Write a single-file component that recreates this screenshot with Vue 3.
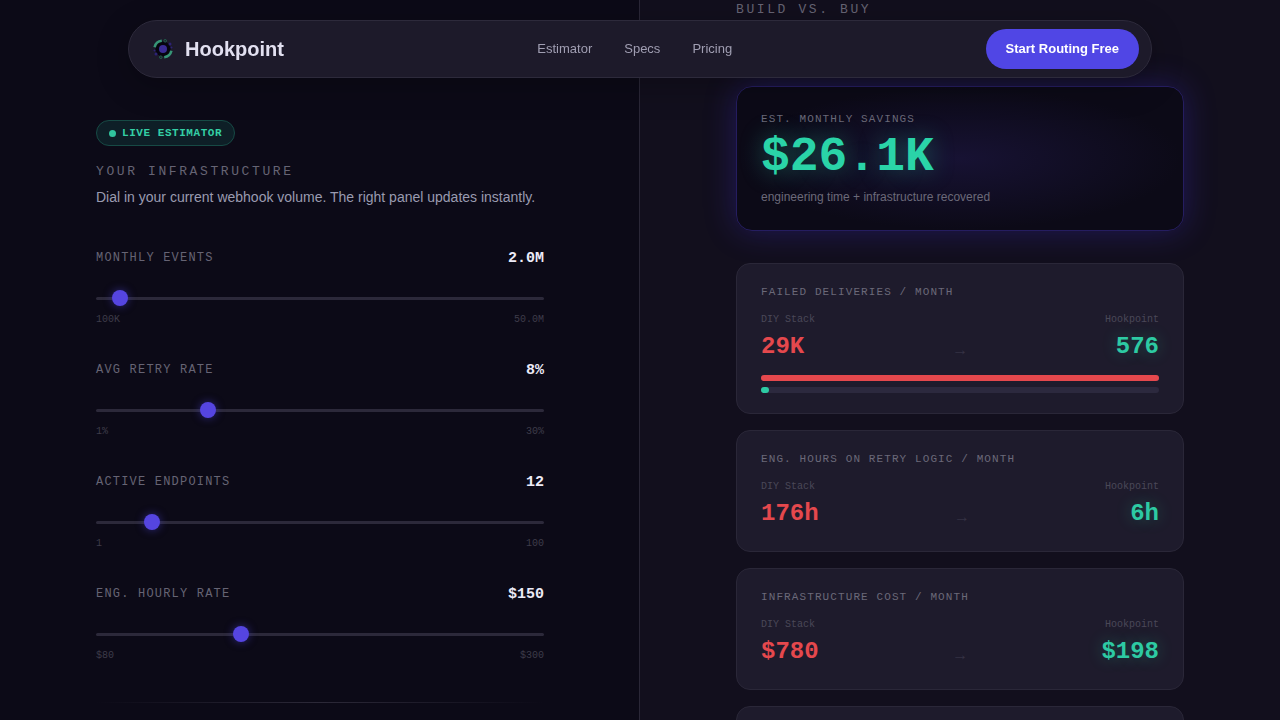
<script setup>
import { ref, computed } from 'vue'

const events = ref(2000000)
const retryRate = ref(8)
const endpoints = ref(12)
const hourlyRate = ref(150)

const sliders = [
  { id: 'events', label: 'Monthly Events', model: events, min: 100000, max: 50000000, step: 100000, format: (n) => (n >= 1e6 ? (n / 1e6).toFixed(1) + 'M' : Math.round(n / 1e3) + 'K') },
  { id: 'retry', label: 'Avg Retry Rate', model: retryRate, min: 1, max: 30, step: 1, format: (n) => n + '%' },
  { id: 'endpoints', label: 'Active Endpoints', model: endpoints, min: 1, max: 100, step: 1, format: (n) => String(n) },
  { id: 'rate', label: 'Eng. Hourly Rate', model: hourlyRate, min: 80, max: 300, step: 5, format: (n) => '$' + n }
]

const cards = [
  { title: 'Failed Deliveries / Month', diy: '29K', hook: '576', share: 2, bars: true },
  { title: 'Eng. Hours on Retry Logic / Month', diy: '176h', hook: '6h' },
  { title: 'Infrastructure Cost / Month', diy: '$780', hook: '$198' }
]

const rows = computed(() => sliders.map((s) => ({ ...s, value: s.model.value })))
function update(row, event) {
  row.model.value = Number(event.target.value)
}
</script>

<template>
  <div class="page">
    <header class="nav">
      <a class="brand" href="#">
        <svg class="logo" viewBox="0 0 20 20" fill="none" aria-hidden="true">
          <circle cx="10" cy="10" r="7.6" fill="#06050f" />
          <circle cx="10" cy="10" r="4" fill="#3a2b94" />
          <path d="M1.6 8.2C2.4 4.6 5 2.2 8.8 1.8" stroke="#379577" stroke-width="2.6" />
          <path d="M18.4 11.8C17.6 15.4 15 17.8 11.2 18.2" stroke="#379577" stroke-width="2.6" />
          <circle cx="12.2" cy="1.8" r="1.3" stroke="#24624f" />
          <circle cx="7.8" cy="18.2" r="1.3" stroke="#24624f" />
          <circle cx="17" cy="5" r="1.5" fill="#2c2275" />
          <circle cx="3" cy="15" r="1.5" fill="#2c2275" />
          <circle cx="1.5" cy="11.5" r="1" fill="#2c2275" />
          <circle cx="18.5" cy="8.5" r="1" fill="#2c2275" />
        </svg>
        <span>Hookpoint</span>
      </a>
      <nav class="links">
        <a href="#estimator">Estimator</a>
        <a href="#specs">Specs</a>
        <a href="#pricing">Pricing</a>
      </nav>
      <button class="cta" type="button">Start Routing Free</button>
    </header>

    <main class="split">
      <section id="estimator" class="panel inputs">
        <div class="badge"><span class="dot"></span>LIVE ESTIMATOR</div>
        <h2 class="eyebrow">Your Infrastructure</h2>
        <p class="intro">Dial in your current webhook volume. The right panel updates instantly.</p>
        <div class="sliders">
          <div v-for="row in rows" :key="row.id" class="field">
            <div class="field-head">
              <label :for="row.id">{{ row.label }}</label>
              <output :for="row.id">{{ row.format(row.value) }}</output>
            </div>
            <input :id="row.id" type="range" :min="row.min" :max="row.max" :step="row.step" :value="row.value" @input="update(row, $event)" />
            <div class="bounds">
              <span>{{ row.format(row.min) }}</span>
              <span>{{ row.format(row.max) }}</span>
            </div>
          </div>
        </div>
        <hr class="rule" />
      </section>

      <section class="panel results">
        <h2 class="eyebrow">Build vs. Buy</h2>
        <article class="savings">
          <h3 class="metric">Est. Monthly Savings</h3>
          <p class="total">$26.1K</p>
          <p class="note">engineering time + infrastructure recovered</p>
        </article>
        <article v-for="card in cards" :key="card.title" class="card">
          <h3 class="metric">{{ card.title }}</h3>
          <div class="compare">
            <div class="side">
              <span class="who">DIY Stack</span>
              <span class="figure diy">{{ card.diy }}</span>
            </div>
            <span class="arrow">→</span>
            <div class="side end">
              <span class="who">Hookpoint</span>
              <span class="figure hook">{{ card.hook }}</span>
            </div>
          </div>
          <div v-if="card.bars" class="bars">
            <div class="bar"><div class="fill diy-fill"></div></div>
            <div class="bar"><div class="fill hook-fill" :style="{ width: card.share + '%' }"></div></div>
          </div>
        </article>
        <article class="card"></article>
      </section>
    </main>
  </div>
</template>

<style>
body {
  margin: 0;
  background: #0c0a17;
}
</style>

<style scoped>
.page {
  height: 100vh;
  overflow: hidden;
  font-family: "Liberation Sans", Arial, sans-serif;
  color: #e2e0f0;
}
h2,
h3,
p {
  margin: 0;
}
a {
  color: inherit;
  text-decoration: none;
}
.nav {
  position: fixed;
  z-index: 10;
  top: 20px;
  left: 10%;
  right: 10%;
  box-sizing: border-box;
  display: flex;
  align-items: center;
  justify-content: space-between;
  padding: 8px 12px 8px 24px;
  border: 1px solid #2d2a3b;
  border-radius: 999px;
  background: #1d1a2a;
  box-shadow: 0 8px 32px rgba(0, 0, 0, 0.25);
}
.brand {
  display: flex;
  align-items: center;
  gap: 12px;
  font-size: 20px;
  font-weight: 700;
}
.logo {
  width: 20px;
  height: 20px;
}
.links {
  display: flex;
  gap: 32px;
  padding-bottom: 2px;
  font-size: 13px;
  color: #a09eb2;
}
.cta {
  height: 40px;
  padding: 0 20px 2px;
  border: 0;
  border-radius: 999px;
  background: #5046e5;
  color: #fff;
  font: 700 13px "Liberation Sans", Arial, sans-serif;
}
.split {
  display: grid;
  grid-template-columns: 1fr 1fr;
  min-height: 100%;
}
.panel {
  min-width: 0;
  padding: 0 96px;
}
.inputs {
  padding-top: 120px;
  padding-right: 95px;
  border-right: 1px solid #2a2737;
  background: #0c0a17;
}
.results {
  padding-top: 1px;
  background: #120f1d;
}
.badge {
  display: inline-flex;
  align-items: center;
  gap: 6px;
  box-sizing: border-box;
  height: 26px;
  padding: 0 12px;
  border: 1px solid #174a45;
  border-radius: 999px;
  background: #0e1f27;
  color: #34cfa5;
  font: 700 11px "Liberation Mono", monospace;
  letter-spacing: 0.05em;
}
.dot {
  width: 7px;
  height: 7px;
  border-radius: 50%;
  background: #30c39d;
}
.eyebrow {
  font: 400 13px/18px "Liberation Mono", monospace;
  letter-spacing: 0.2em;
  text-transform: uppercase;
  color: #666474;
}
.inputs .eyebrow {
  margin-top: 17px;
}
.intro {
  margin-top: 5px;
  font-size: 14px;
  line-height: 22px;
  color: #9a9bb0;
}
.sliders {
  display: grid;
  gap: 36px;
  margin-top: 41px;
}
.field-head,
.bounds {
  display: flex;
  justify-content: space-between;
  align-items: center;
  font-family: "Liberation Mono", monospace;
}
.field-head {
  height: 18px;
}
label {
  font-size: 12px;
  letter-spacing: 0.1em;
  text-transform: uppercase;
  color: #666474;
}
output {
  font-size: 15px;
  font-weight: 700;
  color: #eceaf7;
}
input[type="range"] {
  appearance: none;
  display: block;
  width: 100%;
  height: 16px;
  margin: 23px 0 8px;
  background: transparent;
}
input[type="range"]::-webkit-slider-runnable-track {
  height: 3px;
  border-radius: 2px;
  background: #2c293a;
}
input[type="range"]::-webkit-slider-thumb {
  appearance: none;
  width: 16px;
  height: 16px;
  margin-top: -7px;
  border-radius: 50%;
  background: #5545e0;
  box-shadow: 0 0 8px rgba(79, 70, 229, 0.5);
}
.bounds {
  height: 11px;
  font-size: 10px;
  color: #3e3c4a;
}
.rule {
  height: 1px;
  margin: 41px 0 0;
  border: 0;
  background: linear-gradient(90deg, transparent, #2c2938, transparent);
}
.savings {
  margin: 67px 0 32px;
  padding: 24px;
  border: 1px solid #251d60;
  border-radius: 16px;
  background: radial-gradient(ellipse at center, #171233 0%, #0c0a17 70%);
  box-shadow: 0 0 32px rgba(70, 50, 229, 0.3);
}
.metric {
  font: 400 11px/16px "Liberation Mono", monospace;
  letter-spacing: 0.1em;
  text-transform: uppercase;
  color: #6b6979;
}
.total {
  padding-top: 4px;
  font: 700 48px/52px "Liberation Mono", monospace;
  color: #2ad4a8;
  text-shadow: 0 0 24px rgba(42, 212, 168, 0.4);
}
.note {
  margin-top: 6px;
  font-size: 12px;
  line-height: 17px;
  color: #6b6979;
}
.card {
  min-height: 80px;
  margin-bottom: 16px;
  padding: 20px 24px;
  border: 1px solid #2a2738;
  border-radius: 14px;
  background: #1e1b2c;
}
.compare {
  display: flex;
  justify-content: space-between;
  align-items: flex-end;
  margin-top: 13px;
  padding-bottom: 3px;
  font-family: "Liberation Mono", monospace;
}
.side {
  display: flex;
  flex-direction: column;
}
.end {
  align-items: flex-end;
}
.who {
  font-size: 10px;
  line-height: 14px;
  color: #4a4858;
}
.figure {
  margin-top: 6px;
  font-size: 24px;
  font-weight: 700;
  line-height: 28px;
}
.diy {
  color: #e5484d;
}
.hook {
  color: #2dcaa3;
  text-shadow: 0 0 16px rgba(42, 212, 168, 0.3);
}
.arrow {
  font-size: 16px;
  line-height: 20px;
  color: #353244;
}
.bars {
  display: grid;
  gap: 6px;
  margin-top: 11px;
}
.bar {
  height: 6px;
  border-radius: 3px;
  background: #2c293e;
}
.fill {
  height: 6px;
  border-radius: 3px;
}
.diy-fill {
  background: #e5484d;
}
.hook-fill {
  background: #2dcaa3;
}
</style>
